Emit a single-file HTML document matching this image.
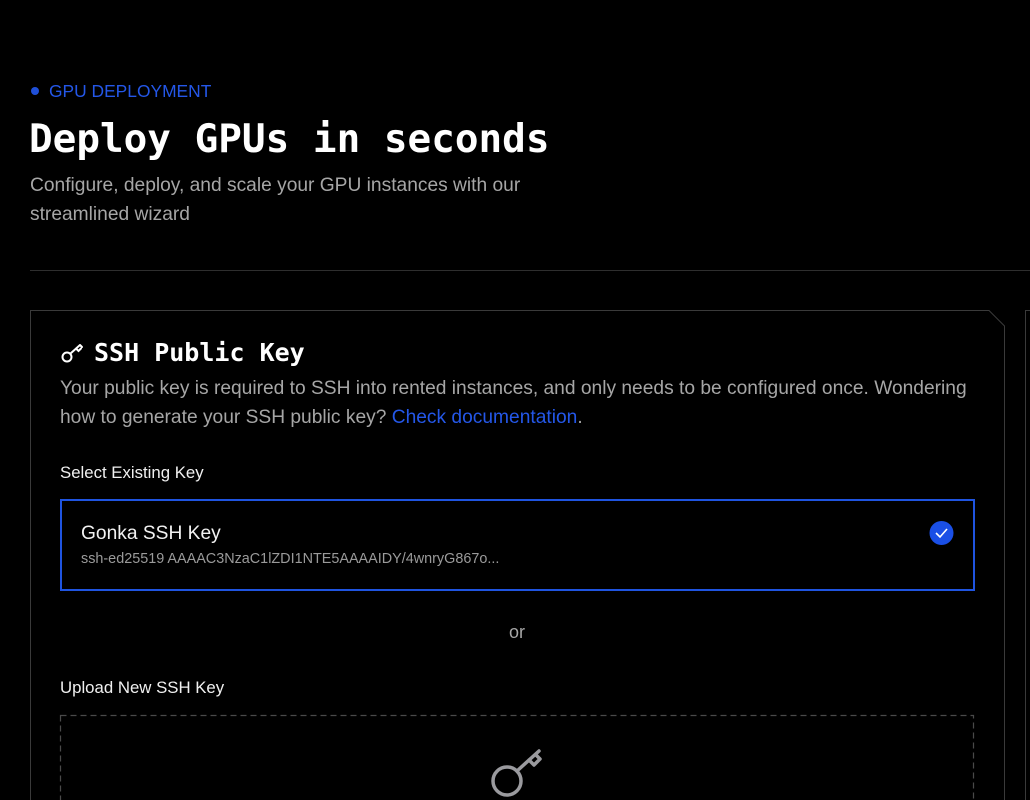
<!DOCTYPE html>
<html><head><meta charset="utf-8"><style>
html,body{margin:0;padding:0;background:#000;width:1030px;height:800px;overflow:hidden;position:relative;font-family:"Liberation Sans",sans-serif}
.a{position:absolute}
</style></head><body>
<div class="a" style="left:31px;top:87px;width:8px;height:8px;border-radius:50%;background:#1f4fd8"></div>
<div class="a" style="left:49px;top:82px;font-size:17.4px;color:#2457e8;line-height:18px;white-space:nowrap">GPU DEPLOYMENT</div>
<div class="a" style="left:29px;top:116px;font-family:'DejaVu Sans Mono',monospace;font-weight:bold;font-size:39.3px;color:#fff;line-height:48px;white-space:nowrap">Deploy GPUs in seconds</div>
<div class="a" style="left:30px;top:171px;font-size:19.2px;line-height:29px;color:#a6a6a6;width:530px">Configure, deploy, and scale your GPU instances with our streamlined wizard</div>
<div class="a" style="left:30px;top:270px;width:1000px;height:1px;background:#2e2e2e"></div>
<svg class="a" style="left:0;top:0" width="1030" height="800"><path d="M30.5 800 V310.5 H989 L1004.5 326 V800" fill="none" stroke="#3a3a3a"/><path d="M1025.5 800 V310.5 H1030" fill="none" stroke="#3a3a3a"/>
<g fill="none" stroke="#fff" stroke-width="2" stroke-linecap="round"><circle cx="67" cy="357" r="4.5"/><path d="M70.5 353.5 L80 345 M76 348.5 L78.5 351 L81 348.5 M80 345 L82 347"/></g>
<rect x="60.5" y="715.5" width="913" height="120" fill="none" stroke="#4a4a4a" stroke-width="1.2" stroke-dasharray="6 4"/>
<g fill="none" stroke="#9a9a9e" stroke-width="3.5" stroke-linecap="round" stroke-linejoin="round"><circle cx="507" cy="781" r="14"/><path d="M517 771 L539 751 M529 760 L534 765 L540 759 L536 755"/></g>
<circle cx="941.5" cy="533" r="12" fill="#1a4fe6"/><path d="M936 533 L940 537 L947 529" fill="none" stroke="#fff" stroke-width="1.6"/>
</svg>
<div class="a" style="left:94px;top:336px;font-family:'DejaVu Sans Mono',monospace;font-weight:bold;font-size:25px;color:#fff;line-height:34px;white-space:nowrap">SSH Public Key</div>
<div class="a" style="left:60px;top:374px;width:920px;font-size:19.2px;line-height:29px;color:#a6a6a6">Your public key is required to SSH into rented instances, and only needs to be configured once. Wondering how to generate your SSH public key? <span style="color:#2457e8">Check documentation</span>.</div>
<div class="a" style="left:60px;top:463px;font-size:16.8px;color:#f0f0f0;line-height:20px;white-space:nowrap">Select Existing Key</div>
<div class="a" style="left:60px;top:499px;width:911px;height:88px;border:2px solid #1f54e0"></div>
<div class="a" style="left:81px;top:523px;font-size:19.2px;color:#f2f2f2;line-height:22px;white-space:nowrap">Gonka SSH Key</div>
<div class="a" style="left:81px;top:551px;font-size:14.4px;color:#9a9a9a;line-height:16px;white-space:nowrap">ssh-ed25519 AAAAC3NzaC1lZDI1NTE5AAAAIDY/4wnryG867o...</div>
<div class="a" style="left:0;top:622px;width:1034px;text-align:center;font-size:18px;color:#a6a6a6;line-height:20px">or</div>
<div class="a" style="left:60px;top:678px;font-size:16.8px;color:#f0f0f0;line-height:20px;white-space:nowrap">Upload New SSH Key</div>
</body></html>
